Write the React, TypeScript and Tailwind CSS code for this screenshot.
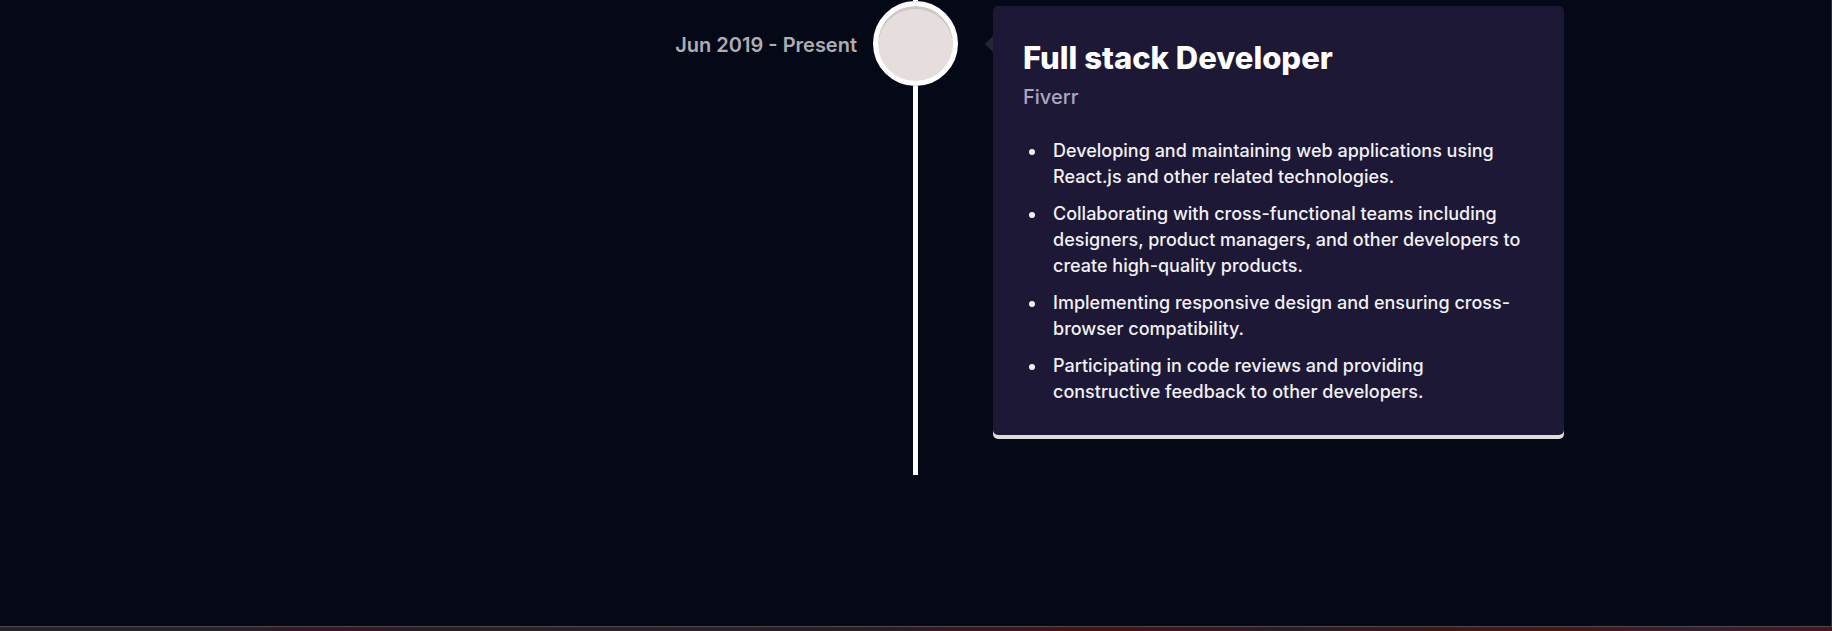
const duties = [
  "Developing and maintaining web applications using React.js and other related technologies.",
  "Collaborating with cross-functional teams including designers, product managers, and other developers to create high-quality products.",
  "Implementing responsive design and ensuring cross-browser compatibility.",
  "Participating in code reviews and providing constructive feedback to other developers.",
];

function TimelineEntry() {
  return (
    <li className="grid grid-cols-[minmax(0,1fr)_85px_minmax(0,1fr)]">
      <p className="mt-8 mr-4 text-right text-[20px] leading-[26px] font-semibold text-[#adaeb3]">
        Jun 2019 - Present
      </p>
      <div className="flex flex-col items-center">
        <div className="h-px w-[5px] shrink-0 bg-white" />
        <div className="size-[85px] shrink-0 rounded-full border-[5px] border-white bg-[#e6dedd] shadow-[inset_0_3px_0_rgba(0,0,0,0.1)]" />
        <div className="w-[5px] grow bg-white" />
      </div>
      <div className="flex items-start pt-1.5 pb-10">
        <svg viewBox="0 0 8 16" className="mt-[30px] ml-[27px] h-4 w-2 shrink-0" fill="#232631" aria-hidden="true">
          <path d="M8 0v16L0 8z" />
        </svg>
        <article className="w-[571px] max-w-full rounded-[5px] bg-[#1d1836] px-[30px] pt-8 pb-[30px] shadow-[0_4px_0_#dddddd]">
          <h3 className="text-[31px] leading-10 font-extrabold text-white">Full stack Developer</h3>
          <p className="text-[20px] leading-[38px] font-medium text-[#aaa6c3]">Fiverr</p>
          <ul className="mt-[22px] ml-6 list-disc space-y-[11px]">
            {duties.map((duty) => (
              <li key={duty} className="pl-1.5 text-[18px] leading-[26px] font-medium text-[#f1f1f3]">
                {duty}
              </li>
            ))}
          </ul>
        </article>
      </div>
    </li>
  );
}

export default function App() {
  return (
    <div className="flex min-h-screen flex-col bg-[#050816] font-['Inter',sans-serif]">
      <main className="grow border-r border-[#2b2d38]">
        <ol>
          <TimelineEntry />
        </ol>
      </main>
      <footer className="h-[5px] border-t border-[#514a4c] bg-[linear-gradient(to_right,#262425_0%,#262425_11%,#3a142b_18%,#2c1f20_24%,#2a2028_40%,#2c1c1c_48%,#4a1115_60%,#2c1c1c_70%,#4a1512_85%,#36202c_93%,#4a1519_100%)]" />
    </div>
  );
}
